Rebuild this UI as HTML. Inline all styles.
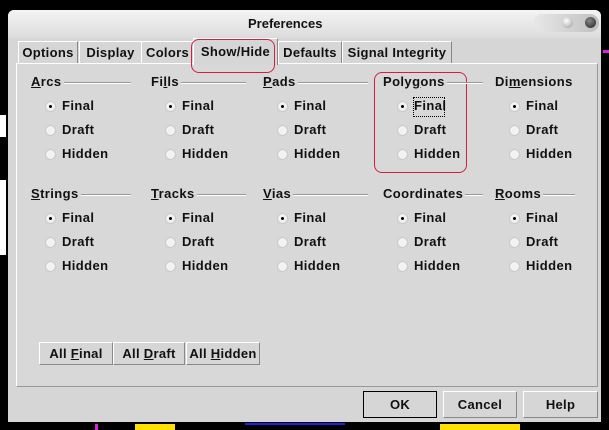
<!DOCTYPE html>
<html><head><style>
body{margin:0;width:609px;height:430px;background:#000;position:relative;overflow:hidden;font-family:"Liberation Sans",sans-serif;font-size:13px;font-weight:bold;color:#111;white-space:nowrap}
.a{position:absolute}
#dlg{left:8px;top:10px;width:593px;height:412px;background:#d6d6d6;border-radius:6px 6px 0 0}
#title{left:8px;top:10px;width:593px;height:28px;border-radius:6px 6px 0 0;background:linear-gradient(#f4f4f4,#dcdcdc)}
.tab{position:absolute;top:41px;height:22px;background:#d6d6d6;border:1px solid #fff;border-right-color:#888;border-bottom:none;line-height:22px;text-align:center;letter-spacing:0.3px}
#panel{left:16px;top:63px;width:580px;height:322px;border:1px solid #fff;border-right-color:#999;border-bottom-color:#999;background:#d8d8d8}
.lbl{position:absolute;height:15px;line-height:15px;letter-spacing:0.4px}
.line{position:absolute;height:1px;background:#999;border-bottom:1px solid #fff}
.r{position:absolute;width:9px;height:9px;border-radius:50%;background:#f2f2f2;border:1px solid #c8c8c8}
.r.on:after{content:"";position:absolute;left:3px;top:3px;width:3px;height:3px;background:#000;border-radius:50%}
.btn{position:absolute;background:#d6d6d6;border:1px solid #fff;border-right-color:#888;border-bottom-color:#888;text-align:center;letter-spacing:0.3px}
u{text-decoration:underline}
</style></head><body>
<div class="a" style="left:0;top:115px;width:6px;height:22px;background:#fff"></div>
<div class="a" style="left:0;top:180px;width:6px;height:75px;background:#fff"></div>
<div class="a" style="left:603px;top:50px;width:6px;height:3px;background:#e020e0"></div>
<div class="a" id="dlg"></div>
<div class="a" id="title"></div>
<div class="a" style="left:248px;top:16px;font-size:13px">Preferences</div>
<div class="a" style="left:533px;top:14px;width:66px;height:18px;border-radius:9px;background:linear-gradient(90deg,#e8e8e8,#c0c0c0)"></div>
<div class="a" style="left:562px;top:17px;width:11px;height:11px;border-radius:50%;background:radial-gradient(circle at 40% 35%,#fff,#999)"></div>
<div class="a" style="left:585px;top:17px;width:11px;height:11px;border-radius:50%;background:radial-gradient(circle at 40% 35%,#888,#222)"></div>

<div class="tab" style="left:18px;width:58px">Options</div>
<div class="tab" style="left:79px;width:61px">Display</div>
<div class="tab" style="left:141px;width:51px">Colors</div>
<div class="tab" style="left:278px;width:62px">Defaults</div>
<div class="tab" style="left:342px;width:108px">Signal Integrity</div>
<div class="a" id="panel"></div>
<div class="tab" style="left:193px;top:38px;width:83px;height:26px;border-bottom:none;line-height:26px;">Show/Hide</div>
<div class="a" style="left:191px;top:39px;width:82px;height:32px;border:1px solid #d02040;border-radius:8px"></div>
<div class="a" style="left:374px;top:72px;width:91px;height:99px;border:1px solid #d02040;border-radius:8px"></div>

<div id="g"></div>
<script>
var cols=[[31,"<u>A</u>rcs",100],[151,"Fi<u>l</u>ls",95],[263,"<u>P</u>ads",105],[383,"Poly<u>g</u>ons",100],[495,"Di<u>m</u>ensions",80]];
var cols2=[[31,"<u>S</u>trings",100],[151,"<u>T</u>racks",95],[263,"<u>V</u>ias",105],[383,"Coordinates",100],[495,"<u>R</u>ooms",80]];
var h="";
function grp(c,y){c.forEach(function(g,i){
 h+='<div class="lbl" style="left:'+g[0]+'px;top:'+(y-8)+'px;background:#d8d8d8;z-index:2;padding-right:2px">'+g[1]+'</div>';
 h+='<div class="line" style="left:'+g[0]+'px;top:'+y+'px;width:'+g[2]+'px"></div>';
 ["Final","Draft","Hidden"].forEach(function(t,j){var yy=y+24+j*24;
  h+='<div class="r'+(j==0?' on':'')+'" style="left:'+(g[0]+14)+'px;top:'+(yy-5)+'px"></div>';
  h+='<div class="lbl" style="left:'+(g[0]+31)+'px;top:'+(yy-8)+'px">'+t+'</div>';});
});}
grp(cols,82);grp(cols2,194);
document.getElementById("g").innerHTML=h;
</script>
<div class="a" style="left:413px;top:97px;width:30px;height:18px;border:1px dotted #000"></div>

<div class="btn" style="left:39px;top:342px;width:72px;height:21px;line-height:21px">All <u>F</u>inal</div>
<div class="btn" style="left:113px;top:342px;width:70px;height:21px;line-height:21px">All <u>D</u>raft</div>
<div class="btn" style="left:186px;top:342px;width:72px;height:21px;line-height:21px">All <u>H</u>idden</div>

<div class="btn" style="left:363px;top:391px;width:72px;height:25px;line-height:25px;border:1px solid #000">OK</div>
<div class="btn" style="left:443px;top:391px;width:72px;height:25px;line-height:25px">Cancel</div>
<div class="btn" style="left:523px;top:391px;width:73px;height:25px;line-height:25px">Help</div>
<div class="a" style="left:95px;top:424px;width:3px;height:6px;background:#e020e0"></div>
<div class="a" style="left:135px;top:424px;width:40px;height:6px;background:#ffe000"></div>
<div class="a" style="left:245px;top:423px;width:100px;height:2px;background:#2020e0"></div>
<div class="a" style="left:440px;top:424px;width:80px;height:6px;background:#ffe000"></div>
</body></html>
